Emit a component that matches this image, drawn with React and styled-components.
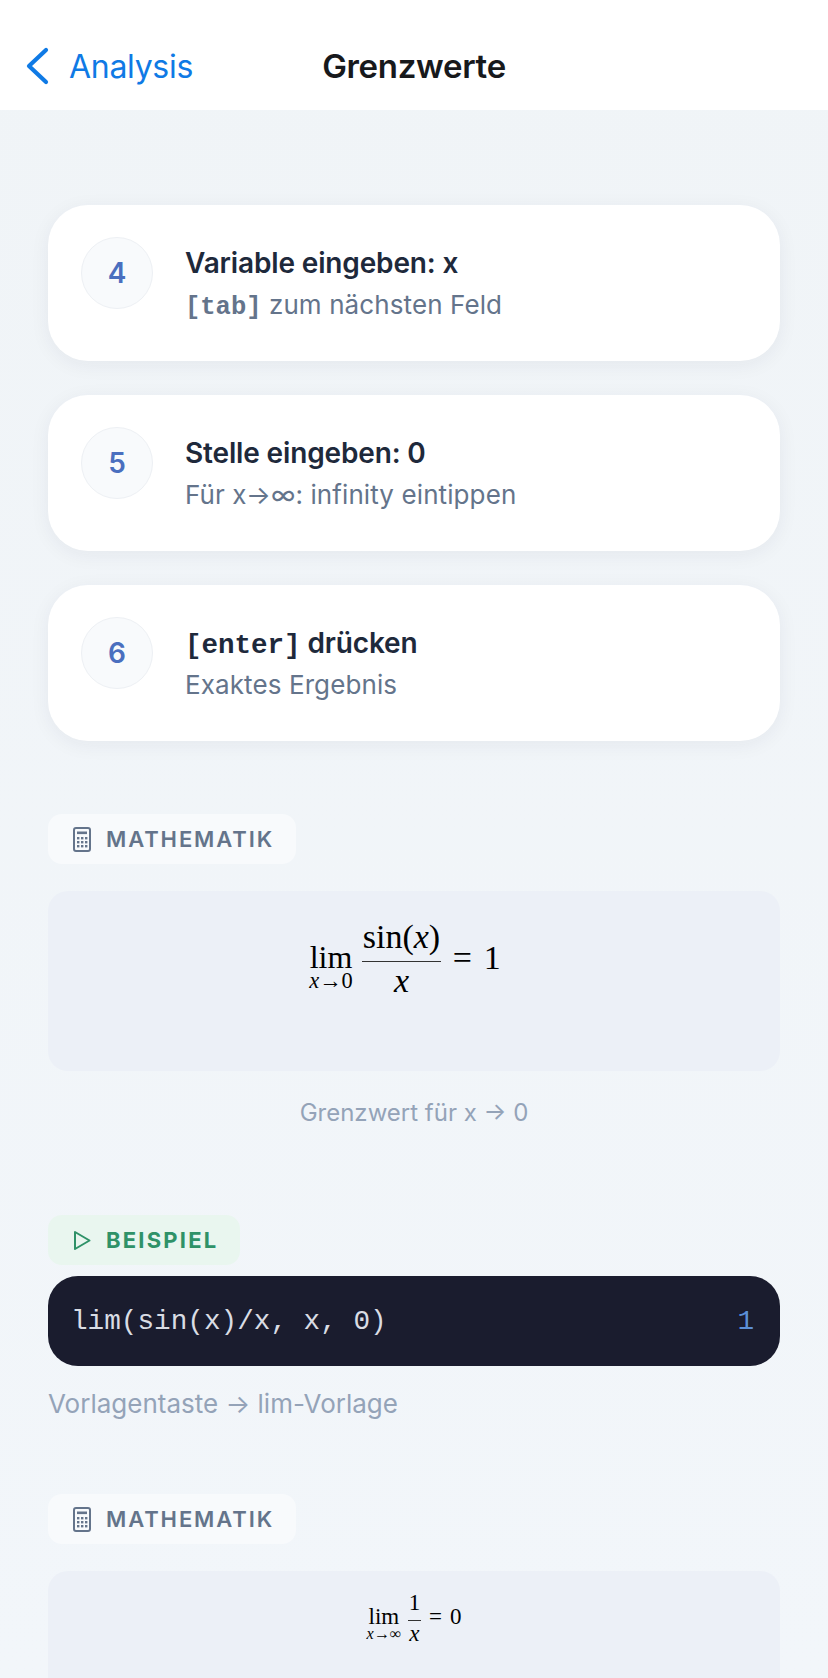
import React from "react"
import styled, { createGlobalStyle } from "styled-components"

const GlobalStyle = createGlobalStyle`
  html, body {
    margin: 0;
    padding: 0;
    font-family: Inter, "Noto Sans", sans-serif;
  }
  body {
    height: 1678px;
    overflow: hidden;
    background: linear-gradient(180deg, #f0f4f7, #f2f6fa);
  }
`

const Header = styled.header`
  display: grid;
  grid-template-columns: 1fr auto 1fr;
  align-items: center;
  height: 110px;
  padding-top: 22px;
  box-sizing: border-box;
  background: #ffffff;
`

const BackLink = styled.div`
  display: flex;
  align-items: center;
  gap: 20px;
  padding-left: 25px;
  color: #0f7ae5;
  font-size: 32px;
  letter-spacing: -0.3px;
  font-weight: 400;
`

const Title = styled.h1`
  margin: 0;
  font-size: 33px;
  font-weight: 600;
  letter-spacing: -0.3px;
  color: #17191c;
`

const Content = styled.main`
  padding: 95px 48px 0;
`

const Steps = styled.div`
  display: flex;
  flex-direction: column;
  gap: 34px;
`

const StepCard = styled.div`
  display: flex;
  align-items: flex-start;
  height: 156px;
  box-sizing: border-box;
  padding: 32px 33px;
  background: #ffffff;
  border-radius: 40px;
  box-shadow: 0 4px 20px rgba(26, 32, 60, 0.06);
`

const StepNumber = styled.div`
  display: flex;
  align-items: center;
  justify-content: center;
  flex: none;
  width: 72px;
  height: 72px;
  margin-right: 32px;
  border-radius: 50%;
  background: #f8fafc;
  border: 1px solid #edf0f4;
  box-sizing: border-box;
  color: #4a6fbf;
  font-size: 28px;
  font-weight: 600;
`

const StepText = styled.div`
  display: flex;
  flex-direction: column;
  gap: 4px;
  padding-top: 6px;
`

const StepTitle = styled.div`
  font-size: 28px;
  line-height: 40px;
  font-weight: 600;
  letter-spacing: -0.15px;
  color: #1e293b;
`

const StepHint = styled.div`
  font-size: 26px;
  line-height: 36px;
  letter-spacing: 0.1px;
  color: #64748b;
`

const Key = styled.code`
  font-family: "Liberation Mono", monospace;
  font-weight: 700;
  line-height: 1;
  letter-spacing: 0;
  font-size: ${props => props.$size || 25.5}px;
`

const Badge = styled.div`
  display: inline-flex;
  align-items: center;
  gap: 15px;
  height: 50px;
  box-sizing: border-box;
  padding: 0 22px 0 25px;
  border-radius: 14px;
  background: ${props => props.$bg};
  color: ${props => props.$color};
  font-size: 22px;
  font-weight: ${props => props.$weight};
  letter-spacing: ${props => props.$spacing}px;
`

const Section = styled.section`
  margin-top: ${props => props.$top}px;
`

const MathBox = styled.div`
  display: flex;
  justify-content: center;
  align-items: flex-start;
  height: ${props => props.$height}px;
  box-sizing: border-box;
  padding-top: ${props => props.$pad}px;
  margin-top: 27px;
  background: #ecf0f7;
  border-radius: 20px;
`

const Formula = styled.div`
  display: inline-flex;
  align-items: center;
  color: #000000;
  font-family: "Liberation Serif", serif;
  font-size: ${props => props.$size}px;
  margin-right: ${props => props.$shift || 0}px;
`

const Limit = styled.span`
  display: inline-flex;
  flex-direction: column;
  align-items: center;
  line-height: 0.85;
  font-size: ${props => props.$size}px;
  margin-right: 0.28em;
  padding-top: 0.55em;
`

const LimitSub = styled.span`
  font-size: 0.7em;
  i {
    font-style: italic;
  }
`

const Fraction = styled.span`
  display: inline-flex;
  flex-direction: column;
  align-items: center;
  line-height: 1.2;
`

const Numerator = styled.span`
  padding: 0 1px 3px;
  border-bottom: ${props => props.$bar}px solid #333;
  text-align: center;
  align-self: stretch;
`

const Denominator = styled.i`
  line-height: 1.1;
`

const Result = styled.span`
  margin-left: 0.34em;
  word-spacing: 0.1em;
`

const Caption = styled.div`
  margin-top: ${props => props.$top}px;
  font-size: ${props => props.$size}px;
  line-height: 34px;
  color: #94a3b8;
  text-align: ${props => props.$align || "left"};
`

const CodeBlock = styled.div`
  display: flex;
  justify-content: space-between;
  align-items: center;
  height: 90px;
  box-sizing: border-box;
  margin-top: 11px;
  padding: 0 26px 0 23px;
  background: #1a1c2e;
  border-radius: 30px;
  font-family: "Liberation Mono", monospace;
  font-size: 27.7px;
  color: #d9dce4;
`

const CodeResult = styled.span`
  color: #5b8fd6;
`

const BackChevron = () => (
  <svg width="24" height="38" viewBox="0 0 24 38" fill="none" stroke="currentColor" strokeWidth="4.2" strokeLinecap="round" strokeLinejoin="round">
    <polyline points="21,3 4,19 21,35" />
  </svg>
)

const CalculatorIcon = () => (
  <svg width="18" height="25" viewBox="0 0 18 25" fill="currentColor">
    <rect x="1" y="1" width="16" height="23" rx="2" fill="none" stroke="currentColor" strokeWidth="2" />
    <rect x="4" y="4.5" width="10" height="2.6" />
    {[10, 14, 18].map(y =>
      [4, 8, 12].map(x => <rect key={`${x}-${y}`} x={x} y={y} width="2.4" height="2.4" />)
    )}
  </svg>
)

const PlayIcon = () => (
  <svg width="18" height="21" viewBox="0 0 18 21" fill="none" stroke="currentColor" strokeWidth="2" strokeLinejoin="round">
    <polygon points="2,2 16.5,10.5 2,19" />
  </svg>
)

const MathBadge = () => (
  <Badge $bg="#f8fafc" $color="#64748b" $weight={600} $spacing={1.9}>
    <CalculatorIcon />
    MATHEMATIK
  </Badge>
)

const steps = [
  { n: 4, title: "Variable eingeben: x", hint: <><Key>[tab]</Key> zum nächsten Feld</> },
  { n: 5, title: "Stelle eingeben: 0", hint: "Für x→∞: infinity eintippen" },
  { n: 6, title: <><Key $size={27.5}>[enter]</Key> drücken</>, hint: "Exaktes Ergebnis" },
]

const App = () => (
  <>
    <GlobalStyle />
    <Header>
      <BackLink>
        <BackChevron />
        Analysis
      </BackLink>
      <Title>Grenzwerte</Title>
    </Header>
    <Content>
      <Steps>
        {steps.map(step => (
          <StepCard key={step.n}>
            <StepNumber>{step.n}</StepNumber>
            <StepText>
              <StepTitle>{step.title}</StepTitle>
              <StepHint>{step.hint}</StepHint>
            </StepText>
          </StepCard>
        ))}
      </Steps>

      <Section $top={73}>
        <MathBadge />
        <MathBox $height={180} $pad={26}>
          <Formula $size={34} $shift={18}>
            <Limit $size={32}>lim<LimitSub><i>x</i>→0</LimitSub></Limit>
            <Fraction>
              <Numerator $bar={1.5}>sin(<i>x</i>)</Numerator>
              <Denominator>x</Denominator>
            </Fraction>
            <Result>= 1</Result>
          </Formula>
        </MathBox>
        <Caption $top={25} $size={24} $align="center">Grenzwert für x → 0</Caption>
      </Section>

      <Section $top={85}>
        <Badge $bg="#e9f6ef" $color="#2f9268" $weight={700} $spacing={2.2}>
          <PlayIcon />
          BEISPIEL
        </Badge>
        <CodeBlock>
          <span>lim(sin(x)/x, x, 0)</span>
          <CodeResult>1</CodeResult>
        </CodeBlock>
        <Caption $top={21} $size={26}>Vorlagentaste → lim-Vorlage</Caption>
      </Section>

      <Section $top={73}>
        <MathBadge />
        <MathBox $height={180} $pad={18}>
          <Formula $size={23}>
            <Limit $size={23}>lim<LimitSub><i>x</i>→∞</LimitSub></Limit>
            <Fraction>
              <Numerator $bar={1}>1</Numerator>
              <Denominator>x</Denominator>
            </Fraction>
            <Result>= 0</Result>
          </Formula>
        </MathBox>
      </Section>
    </Content>
  </>
)

export default App
